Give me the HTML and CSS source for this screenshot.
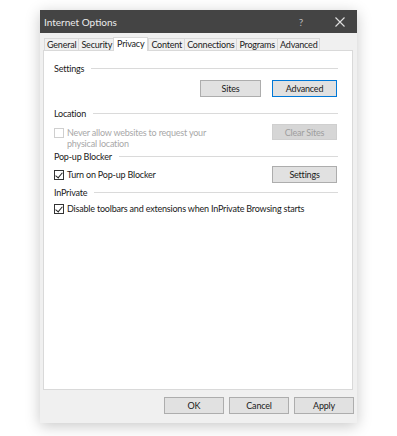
FILE: index.html
```html
<!DOCTYPE html>
<html lang="en">
<head>
  <meta charset="UTF-8">
  <title>Internet Options</title>
  <link rel="stylesheet" href="styles.css">
</head>
<body>
  <div class="dialog">
    <div class="titlebar">
      <span class="title">Internet Options</span>
      <span class="help">?</span>
      <span class="close">
        <svg width="10" height="10" viewBox="0 0 10 10"><path d="M0.5 0.5 L9.5 9.5 M9.5 0.5 L0.5 9.5" stroke="#e0e0e0" stroke-width="1.1" fill="none"/></svg>
      </span>
    </div>

    <div class="tabs">
      <div class="tab">General</div>
      <div class="tab">Security</div>
      <div class="tab active">Privacy</div>
      <div class="tab">Content</div>
      <div class="tab">Connections</div>
      <div class="tab">Programs</div>
      <div class="tab">Advanced</div>
    </div>

    <div class="panel">
      <div class="group-title settings-title"><span>Settings</span><i></i></div>
      <div class="row right">
        <button class="btn">Sites</button>
        <button class="btn focused">Advanced</button>
      </div>

      <div class="group-title location-title"><span>Location</span><i></i></div>
      <div class="row option-row location-row">
        <label class="check disabled">
          <span class="box"></span>
          <span class="label-text">Never allow websites to request your<br>physical location</span>
        </label>
        <button class="btn disabled">Clear Sites</button>
      </div>

      <div class="group-title popup-title"><span>Pop-up Blocker</span><i></i></div>
      <div class="row option-row popup-row">
        <label class="check">
          <span class="box checked"></span>
          <span class="label-text">Turn on Pop-up Blocker</span>
        </label>
        <button class="btn">Settings</button>
      </div>

      <div class="group-title inprivate-title"><span>InPrivate</span><i></i></div>
      <div class="row inprivate-row">
        <label class="check">
          <span class="box checked"></span>
          <span class="label-text">Disable toolbars and extensions when InPrivate Browsing starts</span>
        </label>
      </div>
    </div>

    <div class="footer">
      <button class="btn big">OK</button>
      <button class="btn big">Cancel</button>
      <button class="btn big">Apply</button>
    </div>
  </div>
</body>
</html>
```

FILE: styles.css
```css
* {
  margin: 0;
  padding: 0;
  box-sizing: border-box;
}

body {
  font-family: 'Lato', 'Open Sans', sans-serif;
  font-size: 9px;
  letter-spacing: -0.2px;
  color: #1a1a1a;
  background-color: #fff;
  width: 397px;
  height: 436px;
}

.dialog {
  margin: 10px 0 0 40px;
  width: 317px;
  height: 413px;
  background-color: #f0f0f0;
  box-shadow: 0 3px 14px rgba(0, 0, 0, 0.22);
  display: flex;
  flex-direction: column;
}

/* Title bar */
.titlebar {
  height: 23px;
  background-color: #444;
  color: #ececec;
  display: flex;
  align-items: center;
  padding-left: 4px;
  font-size: 10px;
  letter-spacing: 0;
}

.title {
  flex: 1;
}

.help {
  width: 20px;
  margin-right: 12px;
  text-align: center;
  color: #bbb;
}

.close {
  width: 34px;
  display: flex;
  justify-content: center;
}

/* Tabs */
.tabs {
  display: flex;
  align-items: flex-end;
  margin: 4px 0 0 4px;
  height: 13px;
}

.tab {
  height: 12px;
  line-height: 11px;
  padding: 0 2px;
  border: 1px solid #d9d9d9;
  border-bottom: none;
  margin-right: -1px;
  background-color: #f0f0f0;
}

.tab.active {
  height: 14px;
  background-color: #fff;
  padding: 0 3px;
  position: relative;
  z-index: 1;
  margin: 0 0 -1px -1px;
}

/* Panel */
.panel {
  margin: 0 4px 0 3px;
  height: 340px;
  background-color: #fff;
  border: 1px solid #d9d9d9;
  padding: 11px 14px 0 10px;
}

.group-title {
  display: flex;
  align-items: center;
  height: 12px;
}

.group-title i {
  flex: 1;
  height: 1px;
  background-color: #dadada;
  margin-left: 7px;
}

.location-title { margin-top: 10px; }
.popup-title { margin-top: 1px; }
.inprivate-title { margin-top: 3px; }

.row {
  display: flex;
  align-items: flex-start;
}

.row.right {
  justify-content: flex-end;
  gap: 11px;
  margin-top: 6px;
  padding-right: 1px;
}

.option-row {
  justify-content: space-between;
  padding-right: 1px;
}

.location-row {
  margin-top: 5px;
}

.location-row .check {
  margin-top: 3px;
}

.popup-row {
  margin-top: 4px;
  align-items: center;
}

.inprivate-row {
  margin-top: 5px;
}

.check {
  display: flex;
  align-items: flex-start;
  gap: 3px;
  line-height: 11px;
}

.label-text {
  line-height: 11px;
}

.check.disabled {
  color: #a8a8a8;
}

.box {
  width: 10px;
  height: 10px;
  border: 1px solid #333;
  background-color: #fff;
  margin-top: 1px;
  position: relative;
  flex-shrink: 0;
}

.check.disabled .box {
  border-color: #cfcfcf;
}

.box.checked::after {
  content: "";
  position: absolute;
  left: 2px;
  top: 0px;
  width: 3px;
  height: 6px;
  border: solid #222;
  border-width: 0 1px 1px 0;
  transform: rotate(40deg);
}

/* Buttons */
.btn {
  font-family: inherit;
  font-size: 9px;
  letter-spacing: -0.2px;
  color: #1a1a1a;
  width: 61px;
  height: 17px;
  background-color: #e1e1e1;
  border: 1px solid #adadad;
}

.btn.focused {
  width: 65px;
  border-color: #0078d7;
}

.btn.disabled {
  width: 65px;
  height: 16px;
  color: #9e9e9e;
  background-color: #d6d6d6;
  border-color: #cfcfcf;
}

.option-row .btn {
  width: 65px;
}

.footer {
  display: flex;
  justify-content: flex-end;
  gap: 5px;
  margin-top: 7px;
  padding-right: 3px;
}

.btn.big {
  width: 60px;
}
```
